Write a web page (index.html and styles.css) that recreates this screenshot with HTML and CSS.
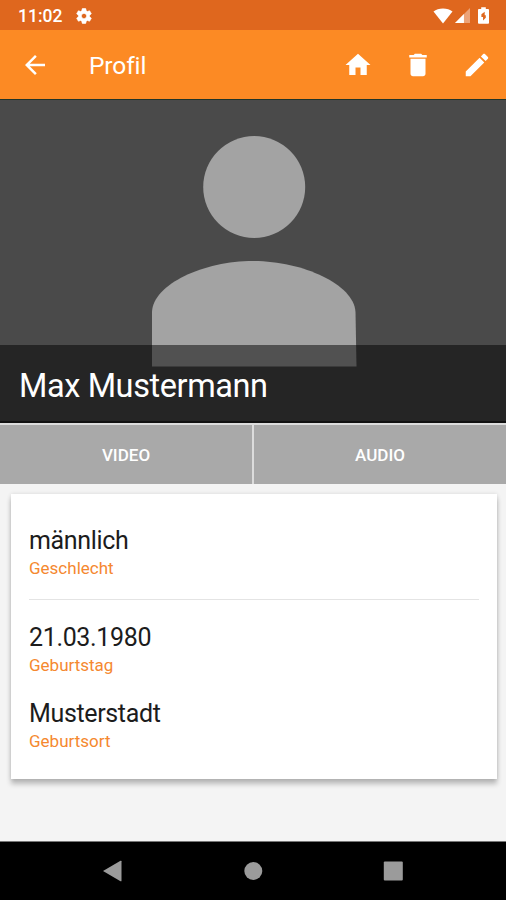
FILE: index.html
```html
<!DOCTYPE html>
<html lang="de">
<head>
  <meta charset="UTF-8" />
  <meta name="viewport" content="width=device-width, initial-scale=1.0"/>
  <title>Profil</title>
  <link rel="stylesheet" href="styles.css">
</head>
<body>

  <div class="status-bar">
    <span class="time">11:02</span>
    <svg class="gear" viewBox="0 0 24 24"><path d="M19.43 12.98c.04-.32.07-.64.07-.98s-.03-.66-.07-.98l2.11-1.65c.19-.15.24-.42.12-.64l-2-3.46c-.12-.22-.39-.3-.61-.22l-2.49 1c-.52-.4-1.08-.73-1.69-.98l-.38-2.65C14.46 2.18 14.25 2 14 2h-4c-.25 0-.46.18-.49.42l-.38 2.65c-.61.25-1.17.59-1.69.98l-2.49-1c-.23-.09-.49 0-.61.22l-2 3.46c-.13.22-.07.49.12.64l2.11 1.65c-.04.32-.07.65-.07.98s.03.66.07.98l-2.11 1.65c-.19.15-.24.42-.12.64l2 3.46c.12.22.39.3.61.22l2.49-1c.52.4 1.08.73 1.69.98l.38 2.65c.03.24.24.42.49.42h4c.25 0 .46-.18.49-.42l.38-2.65c.61-.25 1.17-.59 1.69-.98l2.49 1c.23.09.49 0 .61-.22l2-3.46c.12-.22.07-.49-.12-.64l-2.11-1.65zM12 15.500c-1.930 0-3.500-1.570-3.500-3.500s1.570-3.500 3.500-3.500 3.500 1.570 3.500 3.500-1.570 3.500-3.500 3.500z"/></svg>
    <div class="status-icons">
      <svg class="wifi" viewBox="0 0 20 16"><path d="M.5 3.500C3 1.700 6.200.6 10 .6s7 1.100 9.500 2.900L10 15.500z"/></svg>
      <svg class="signal" viewBox="0 0 16 16"><path d="M16 0v16H0z" opacity=".4"/><path d="M9.500 6.500V16H0z"/></svg>
      <svg class="battery" viewBox="0 0 12 18"><path fill-rule="evenodd" d="M3.500 0h5v2H11q1 0 1 1v14q0 1-1 1H1q-1 0-1-1V3q0-1 1-1h2.500zM7.300 5L3.700 7.500V10.600H5.500V14.500L8.500 11.500V8.600H7.300z"/></svg>
    </div>
  </div>

  <header class="app-bar">
    <svg class="icon" viewBox="0 0 24 24"><path d="M20 11H7.830l5.590-5.590L12 4l-8 8 8 8 1.410-1.410L7.830 13H20v-2z"/></svg>
    <h1 class="title">Profil</h1>
    <div class="actions">
      <svg class="icon" viewBox="0 0 24 24"><path d="M10 20v-6h4v6h5v-8h3L12 3 2 12h3v8z"/></svg>
      <svg class="icon" viewBox="0 0 24 24"><path d="M6 19c0 1.100.9 2 2 2h8c1.100 0 2-.9 2-2V7H6v12zM19 4h-3.500l-1-1h-5l-1 1H5v2h14V4z"/></svg>
      <svg class="icon" viewBox="0 0 24 24"><path d="M3 17.250V21h3.750L17.810 9.940l-3.750-3.750L3 17.250zM20.710 7.040c.39-.39.39-1.020 0-1.410l-2.340-2.340c-.39-.39-1.020-.39-1.410 0l-1.830 1.830 3.750 3.750 1.830-1.830z"/></svg>
    </div>
  </header>

  <section class="hero">
    <svg class="avatar" viewBox="0 0 205 231">
      <circle cx="102.200" cy="51" r="51"/>
      <path d="M0 230.500V176C1 148 52 125 101 125S202 148 203.500 176L204.500 230.500z"/>
    </svg>
    <div class="name">Max Mustermann</div>
  </section>

  <div class="tabs">
    <button class="tab">VIDEO</button>
    <button class="tab">AUDIO</button>
  </div>

  <main class="content">
    <div class="card">
      <div class="field">
        <div class="value">männlich</div>
        <div class="label">Geschlecht</div>
      </div>
      <hr class="divider">
      <div class="field">
        <div class="value">21.03.1980</div>
        <div class="label">Geburtstag</div>
      </div>
      <div class="field">
        <div class="value">Musterstadt</div>
        <div class="label">Geburtsort</div>
      </div>
    </div>
  </main>

  <nav class="nav-bar">
    <svg class="nav-icon" viewBox="0 0 20 22"><path d="M0 11L17.500.8q1-.5 1 .5v19.400q0 1-1 .5z"/></svg>
    <svg class="nav-icon" viewBox="0 0 20 22"><circle cx="10.300" cy="11" r="9"/></svg>
    <svg class="nav-icon" viewBox="0 0 20 22"><rect x=".8" y="1.500" width="19" height="19" rx="1"/></svg>
  </nav>

</body>
</html>
```

FILE: styles.css
```css
* {
  box-sizing: border-box;
}

body {
  margin: 0;
  height: 900px;
  display: flex;
  flex-direction: column;
  background-color: #f4f4f4;
  font-family: Roboto, sans-serif;
  overflow: hidden;
}

svg {
  display: block;
  flex: none;
  fill: #fff;
}

.status-bar {
  height: 30px;
  display: flex;
  align-items: center;
  padding: 1px 17px 0 18px;
  background-color: #df671e;
  color: #fff;
}

.time {
  font-size: 17.5px;
  font-weight: 500;
}

.gear {
  width: 18px;
  height: 18px;
  margin-left: 13px;
  stroke: #fff;
  stroke-width: 0.8;
}

.status-icons {
  display: flex;
  align-items: center;
  margin-left: auto;
}

.wifi {
  width: 20px;
  height: 16px;
}

.signal {
  width: 15px;
  height: 15px;
  margin-left: 2px;
}

.battery {
  width: 11px;
  height: 17px;
  margin-left: 8px;
}

.app-bar {
  height: 70px;
  display: flex;
  align-items: center;
  padding: 1px 14px 0 20px;
  background-color: #fc8a24;
  border-bottom: 1px solid #203429;
  color: #fff;
}

.icon {
  width: 30px;
  height: 30px;
}

.title {
  margin: 0 0 0 39px;
  font-size: 24.5px;
  font-weight: 400;
  letter-spacing: -0.1px;
}

.actions {
  display: flex;
  gap: 29.5px;
  margin-left: auto;
}

.hero {
  position: relative;
  height: 323px;
  padding-top: 36px;
  background-color: #4a4a4a;
}

.avatar {
  width: 205px;
  height: 231px;
  margin-left: 152px;
  fill: #a3a3a3;
}

/* translucent strip over the picture */
.name {
  position: absolute;
  left: 0;
  right: 0;
  bottom: 0;
  height: 78px;
  padding-left: 19px;
  line-height: 82px;
  font-size: 32.5px;
  letter-spacing: -0.4px;
  color: #fff;
  background-color: rgba(0, 0, 0, 0.5);
  border-bottom: 2px solid #111;
}

.tabs {
  display: flex;
  gap: 2px;
  height: 61px;
  padding-top: 2px;
  background-color: #dcdcdc;
}

.tab {
  flex: 1;
  padding: 0;
  border: none;
  background-color: #a9a9a9;
  color: #fff;
  font-family: inherit;
  font-size: 17px;
  font-weight: 500;
}

.content {
  flex: 1;
  padding: 10px 9px 0 11px;
}

.card {
  height: 285px;
  padding: 31px 18px 0;
  background-color: #fff;
  box-shadow: 0 5px 5px rgba(0, 0, 0, 0.24), 0 0 4px rgba(0, 0, 0, 0.12);
}

.value {
  line-height: 32px;
  font-size: 25px;
  letter-spacing: -0.35px;
  color: #1c1c1c;
}

.label {
  line-height: 22px;
  font-size: 17px;
  color: #f5882f;
}

.divider {
  height: 1px;
  margin: 20px 0 22px;
  border: none;
  background-color: #e4e4e4;
}

.field + .field {
  margin-top: 22px;
}

.nav-bar {
  height: 59px;
  display: flex;
  justify-content: center;
  align-items: center;
  gap: 120px;
  border-top: 1px solid #777;
  background-color: #000;
}

.nav-icon {
  width: 20px;
  height: 22px;
  fill: #9b9b9b;
}
```
